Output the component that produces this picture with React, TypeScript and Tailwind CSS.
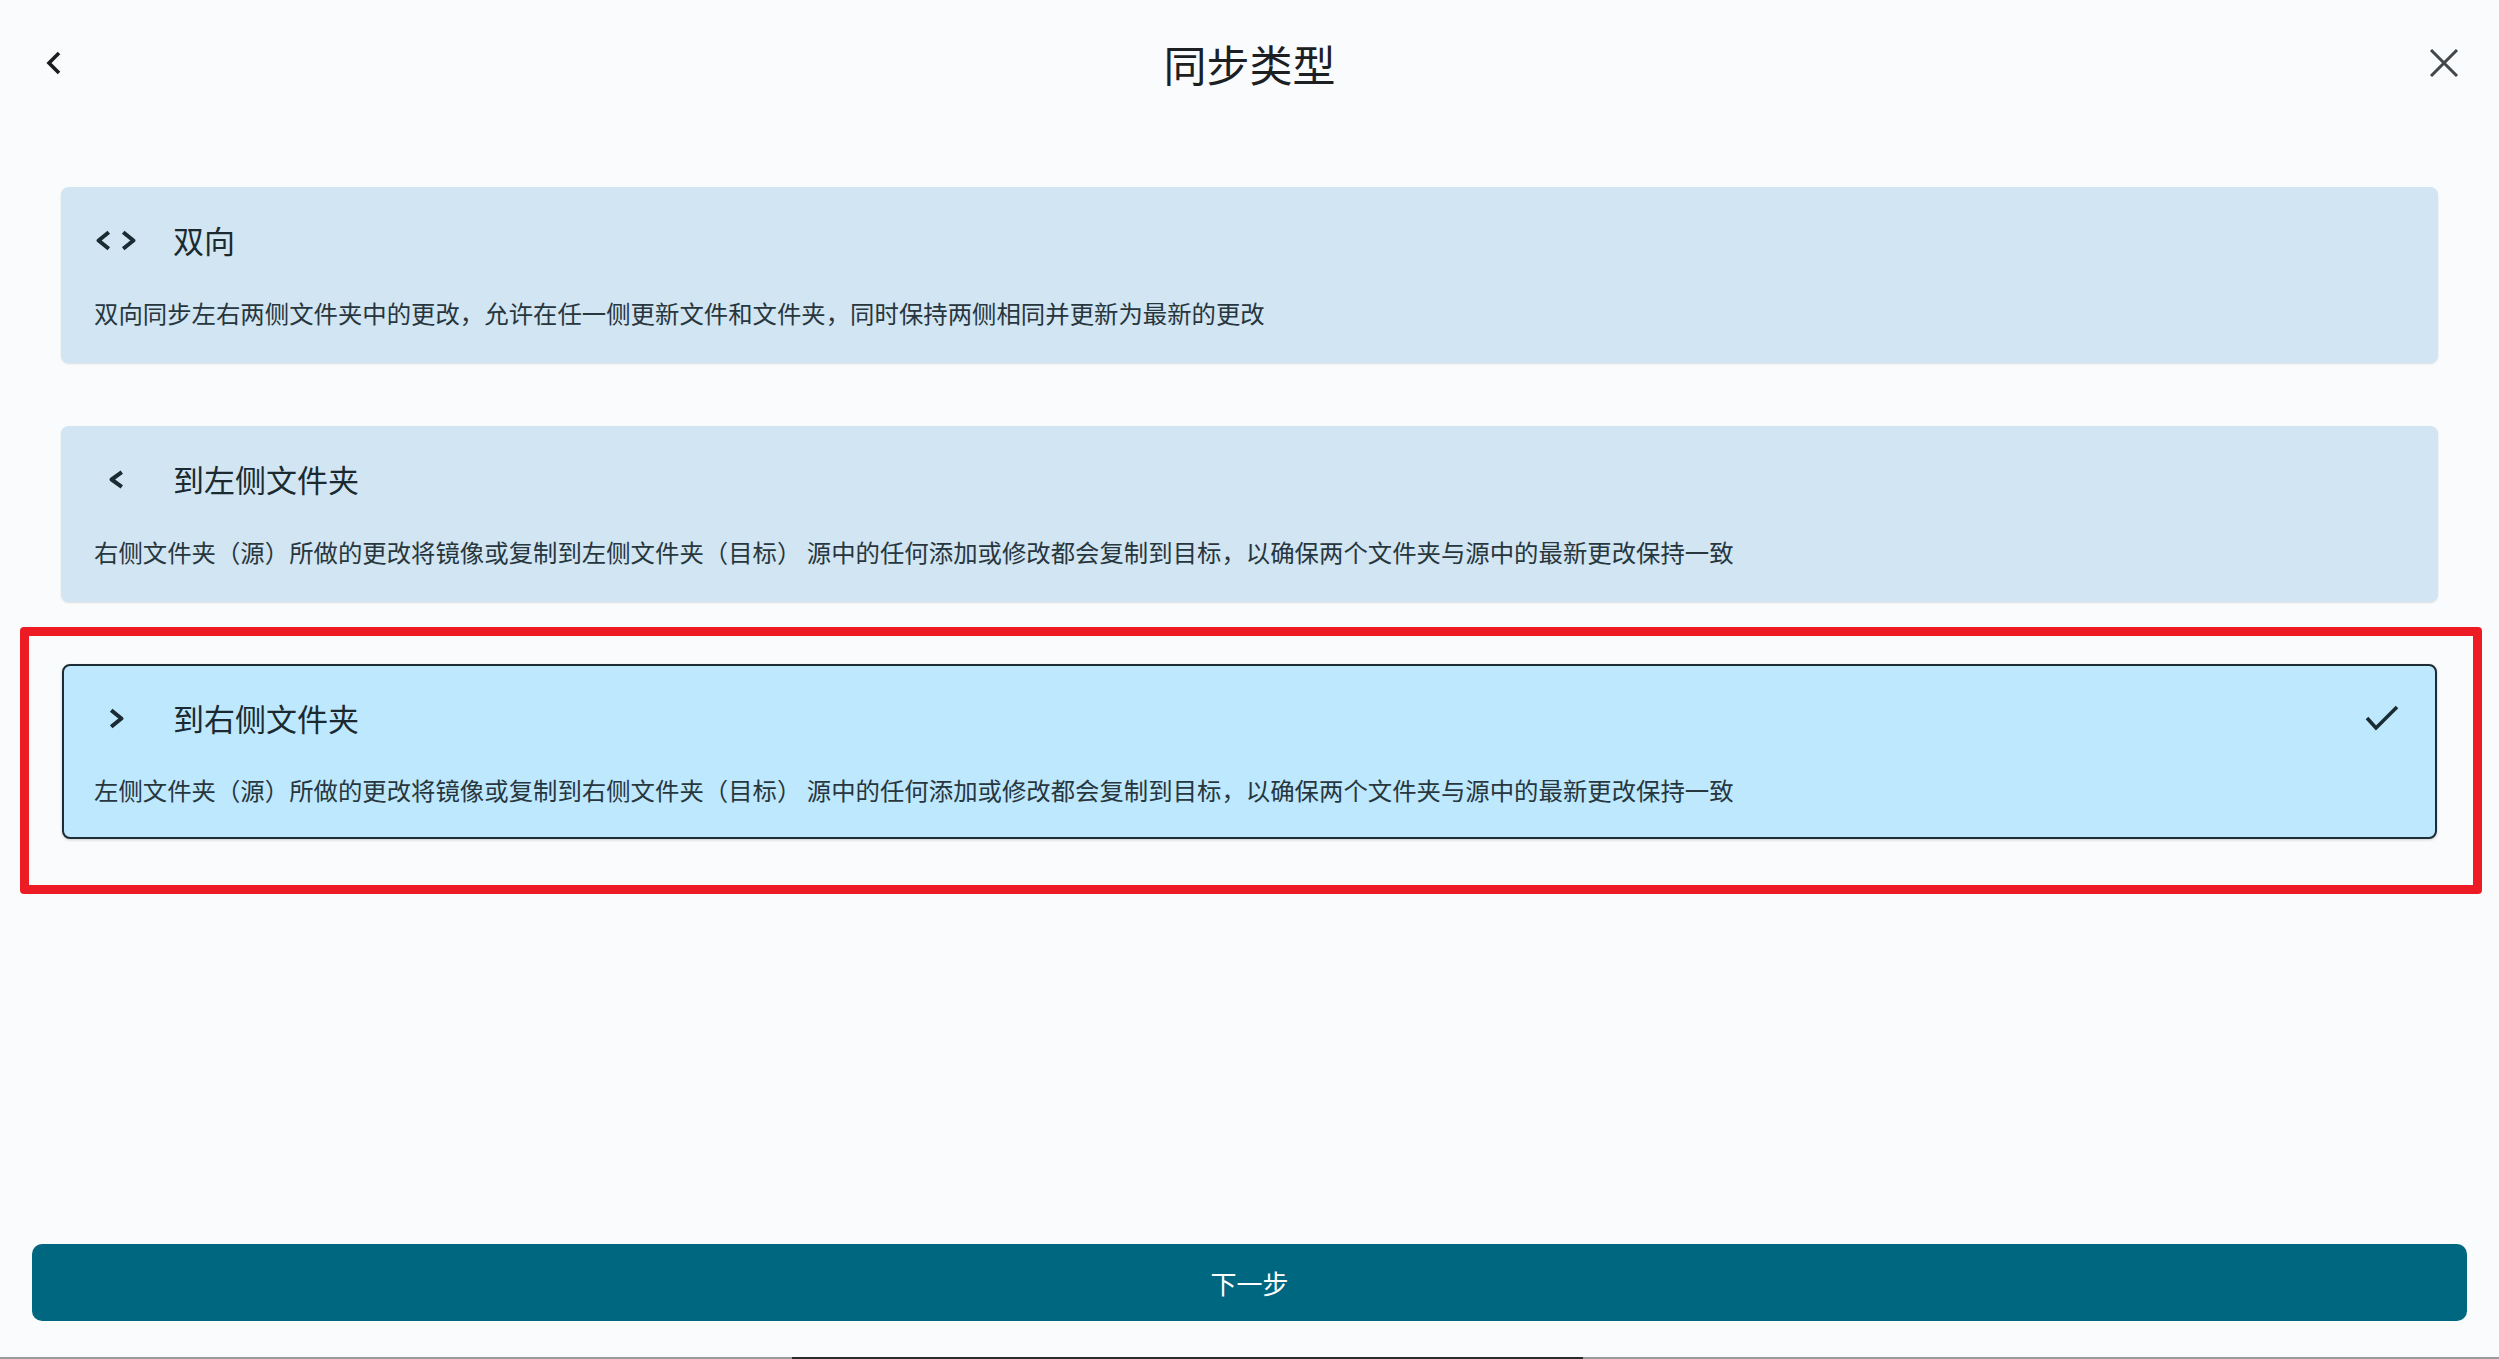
import React from "react";

const Chevron = ({ dir, w = 15, h = 21 }: { dir: "left" | "right"; w?: number; h?: number }) => {
  const pts =
    dir === "left"
      ? `${w - 2.2},2.2 2.6,${h / 2} ${w - 2.2},${h - 2.2}`
      : `2.2,2.2 ${w - 2.6},${h / 2} 2.2,${h - 2.2}`;
  return (
    <svg width={w} height={h} viewBox={`0 0 ${w} ${h}`} fill="none">
      <polyline points={pts} stroke="#1a2b33" strokeWidth="4" strokeLinejoin="round" strokeLinecap="butt" />
    </svg>
  );
};

const CodeIcon = () => (
  <div className="flex items-center gap-[10px]">
    <Chevron dir="left" />
    <Chevron dir="right" />
  </div>
);

const Check = () => (
  <svg width="34" height="26" viewBox="0 0 34 26" fill="none">
    <polyline points="2,13 11,23 32,2" stroke="#1a2b33" strokeWidth="3.6" strokeLinejoin="miter" />
  </svg>
);

type CardProps = {
  icon: React.ReactNode;
  title: string;
  desc: string;
  selected?: boolean;
};

const Card = ({ icon, title, desc, selected }: CardProps) => (
  <div
    className={
      selected
        ? "rounded-[8px] bg-[#bde8fd] border-2 border-[#1c2d35] pl-[30px] pr-[36px] pt-[32px] pb-[30px] shadow-[0_1px_3px_rgba(0,0,0,0.18)]"
        : "rounded-[8px] bg-[#d1e5f2] pl-[33px] pr-[37px] pt-[33px] pb-[33px] shadow-[0_1px_2px_rgba(0,0,0,0.12)]"
    }
  >
    <div className="flex items-center h-[40px]">
      <div className="w-[44px] flex justify-center items-center">{icon}</div>
      <div className="ml-[35px] text-[31px] leading-[40px] text-[#1b2a31]">{title}</div>
      {selected && (
        <div className="ml-auto flex items-center">
          <Check />
        </div>
      )}
    </div>
    <div
      className={
        selected
          ? "mt-[35px] text-[24.4px] leading-[34px] text-[#28363d] whitespace-nowrap"
          : "mt-[36px] text-[24.4px] leading-[34px] text-[#28363d] whitespace-nowrap"
      }
    >
      {desc}
    </div>
  </div>
);

export default function App() {
  return (
    <div className="w-full h-[1359px] bg-[#f9fbfd] flex flex-col font-['Noto_Sans_CJK_SC','Noto_Sans',sans-serif] overflow-hidden">
      <div className="h-[125px] flex items-center relative shrink-0">
        <div className="ml-[46px] flex items-center">
          <svg width="16" height="24" viewBox="0 0 16 24" fill="none">
            <polyline points="13,2 3,12 13,22" stroke="#1a1c1e" strokeWidth="3.6" strokeLinejoin="miter" />
          </svg>
        </div>
        <div className="flex-1 flex justify-center">
          <div className="text-[43px] leading-[56px] text-[#1d2023] translate-x-[4px]">同步类型</div>
        </div>
        <div className="mr-[40px] flex items-center">
          <svg width="30" height="28" viewBox="0 0 30 28" fill="none">
            <line x1="2" y1="1" x2="28" y2="27" stroke="#41474b" strokeWidth="3" />
            <line x1="28" y1="1" x2="2" y2="27" stroke="#41474b" strokeWidth="3" />
          </svg>
        </div>
      </div>

      <div className="px-[61px] mt-[62px] flex flex-col shrink-0">
        <Card
          icon={<CodeIcon />}
          title="双向"
          desc="双向同步左右两侧文件夹中的更改，允许在任一侧更新文件和文件夹，同时保持两侧相同并更新为最新的更改"
        />
        <div className="mt-[63px]">
          <Card
            icon={<Chevron dir="left" w={15} h={19} />}
            title="到左侧文件夹"
            desc="右侧文件夹（源）所做的更改将镜像或复制到左侧文件夹（目标） 源中的任何添加或修改都会复制到目标，以确保两个文件夹与源中的最新更改保持一致"
          />
        </div>
        <div className="mt-[25px] ml-[-41px] mr-[-44px] border-[9px] border-[#ed1c24] rounded-[4px] pl-[33px] pr-[36px] pt-[28px] pb-[46px]">
          <Card
            icon={<Chevron dir="right" />}
            title="到右侧文件夹"
            desc="左侧文件夹（源）所做的更改将镜像或复制到右侧文件夹（目标） 源中的任何添加或修改都会复制到目标，以确保两个文件夹与源中的最新更改保持一致"
            selected
          />
        </div>
      </div>

      <div className="flex-1" />

      <div className="px-[32px] shrink-0">
        <button className="w-full h-[77px] rounded-[10px] bg-[#006781] text-white text-[26px] leading-[34px] flex items-center justify-center">
          下一步
        </button>
      </div>
      <div className="h-[36px] shrink-0" />
      <div className="h-[2px] flex shrink-0 bg-[#9a9a9a]">
        <div className="w-[792px]" />
        <div className="w-[791px] bg-[#2b2b2b]" />
      </div>
    </div>
  );
}
